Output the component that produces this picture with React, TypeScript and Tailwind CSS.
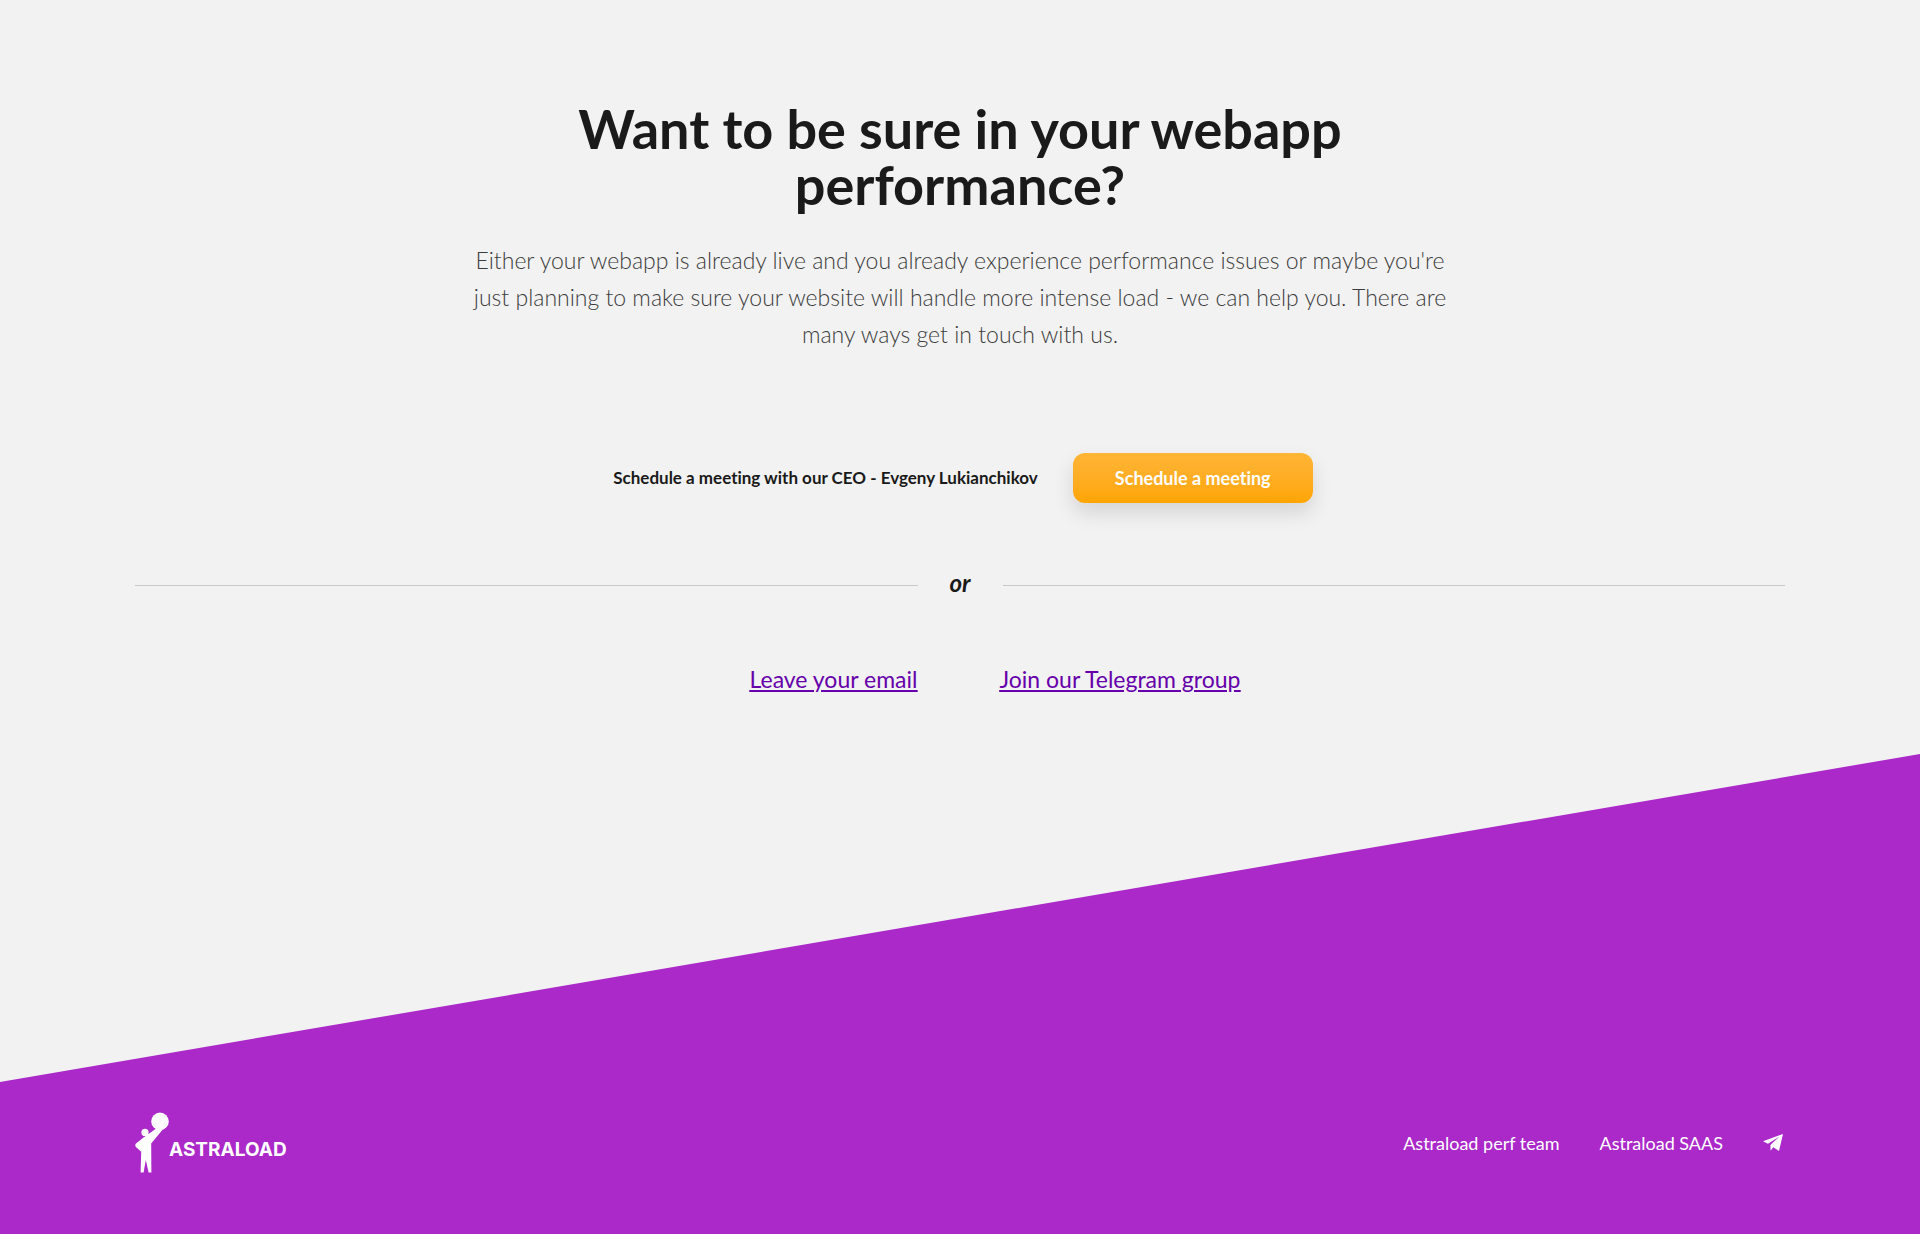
function Logo() {
  return (
    <a href="#home" aria-label="Astraload" className="flex text-white">
      <svg width="164" height="62" viewBox="0 0 164 62" fill="currentColor" aria-hidden="true">
        <circle cx="25" cy="9.4" r="8.8" />
        <circle cx="10" cy="20.4" r="3.6" />
        <path d="M20.5 17 L8.5 25.4 L1 31.6 Q-0.4 33.2 0.9 35 L6.2 39.8 L5.6 60.4 H8.6 L10.8 48 L13.6 60.4 H16.4 L16.2 31.6 L27.8 17.4 Z" />
        <text x="34" y="44" className="text-[19px] font-bold [font-family:Inter,sans-serif]">
          ASTRALOAD
        </text>
      </svg>
    </a>
  );
}

function PlaneIcon() {
  return (
    <svg width="20" height="18" viewBox="0 0 20 18" fill="currentColor" aria-hidden="true">
      <path d="M20 0 L0 7.3 L5 9.8 L16.2 2.8 L7.4 11 L7.6 16.8 L10.3 13.2 L16 17 Z" />
    </svg>
  );
}

export default function App() {
  return (
    <div className="flex min-h-screen flex-col bg-[#f2f2f2] text-[#1a1a1a] [font-family:Lato,sans-serif] [font-variant-ligatures:none]">
      <main className="mx-auto w-full max-w-[1650px] grow">
        <section className="mx-auto flex max-w-[990px] flex-col items-center pt-[101px] text-center">
          <h1 className="max-w-[800px] text-[54px] leading-[56px] font-bold">
            Want to be sure in your webapp performance?
          </h1>
          <p className="mt-[29px] text-[23px] leading-[37px] font-light text-[#3c3c3c]">
            Either your webapp is already live and you already experience performance issues or maybe you're
            just planning to make sure your website will handle more intense load - we can help you. There are
            many ways get in touch with us.
          </p>
        </section>
        <div className="mt-[100px] flex items-center justify-center gap-[35px] pl-1.5">
          <p className="text-[17px] leading-6 font-bold">Schedule a meeting with our CEO - Evgeny Lukianchikov</p>
          <button
            type="button"
            className="h-[50px] w-60 rounded-xl bg-linear-to-b from-[#ffb535] to-[#ffa500] text-[18px] font-bold text-white shadow-[0_10px_20px_rgba(0,0,0,0.12)]"
          >
            Schedule a meeting
          </button>
        </div>
        <div className="mt-16 flex items-center">
          <hr className="grow border-[#c8c8c8]" />
          <span className="w-[85px] pb-1 text-center text-[24px] leading-8 font-bold italic">or</span>
          <hr className="grow border-[#c8c8c8]" />
        </div>
        <nav aria-label="Contact" className="mt-[60px] flex justify-center gap-[82px] pl-[70px] text-[23px] leading-8 text-[#6600aa] underline">
          <a href="#email">Leave your email</a>
          <a href="#telegram">Join our Telegram group</a>
        </nav>
      </main>
      <footer className="bg-[#ab28c9] pt-[358px] pb-[60px] text-white [clip-path:polygon(0_328px,100%_0,100%_100%,0_100%)]">
        <div className="mx-auto flex w-full max-w-[1650px] items-center justify-between">
          <Logo />
          <nav aria-label="Footer" className="flex items-center gap-10 pr-0.5 text-[18px] leading-6">
            <a href="#team">Astraload perf team</a>
            <a href="#saas">Astraload SAAS</a>
            <a href="#channel" aria-label="Telegram">
              <PlaneIcon />
            </a>
          </nav>
        </div>
      </footer>
    </div>
  );
}
